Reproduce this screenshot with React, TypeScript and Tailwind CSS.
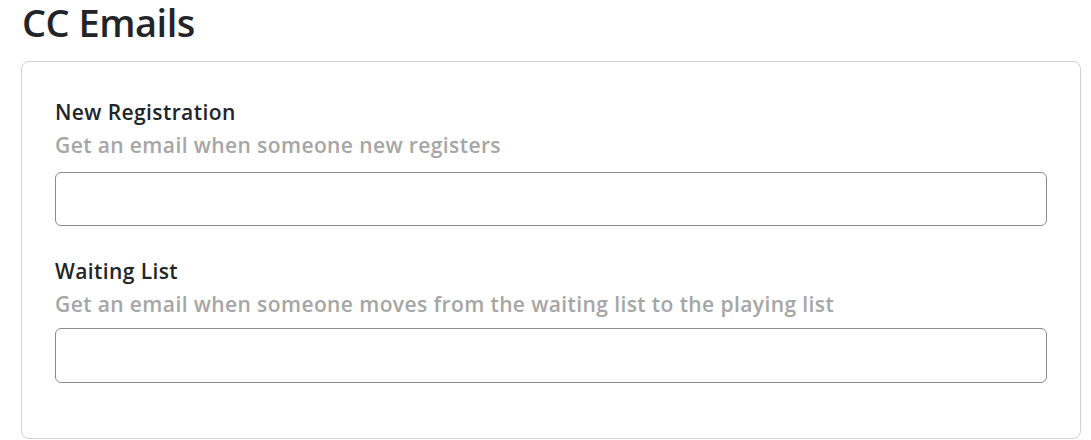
export default function App() {
  return (
    <div className="min-h-screen bg-white text-[#212529]" style={{ fontFamily: '"Open Sans", "Noto Sans", sans-serif' }}>
      <div className="pl-[21px] pr-[10px]">
        <h1 className="pl-[1px] text-[38px] leading-[1.2] font-semibold tracking-[-0.5px]">CC Emails</h1>
        <div className="mt-[15px] rounded-[8px] border border-[#d2d2d2] px-[33px] pt-[35px] pb-[55px]">
          <div className="text-[21px] leading-[30px] font-semibold tracking-[0.4px]">New Registration</div>
          <div className="mt-[3px] text-[21px] leading-[30px] font-semibold text-[#a6a6a6] tracking-[0.4px]">
            Get an email when someone new registers
          </div>
          <input type="text" className="mt-[12px] block h-[54px] w-full rounded-[6px] border border-[#8c8c8c] bg-white px-3 outline-none" />

          <div className="mt-[30px] text-[21px] leading-[30px] font-semibold tracking-[0.4px]">Waiting List</div>
          <div className="mt-[3px] text-[21px] leading-[30px] font-semibold text-[#a6a6a6] tracking-[0.4px]">
            Get an email when someone moves from the waiting list to the playing list
          </div>
          <input type="text" className="mt-[9px] block h-[55px] w-full rounded-[6px] border border-[#8c8c8c] bg-white px-3 outline-none" />
        </div>
      </div>
    </div>
  );
}
